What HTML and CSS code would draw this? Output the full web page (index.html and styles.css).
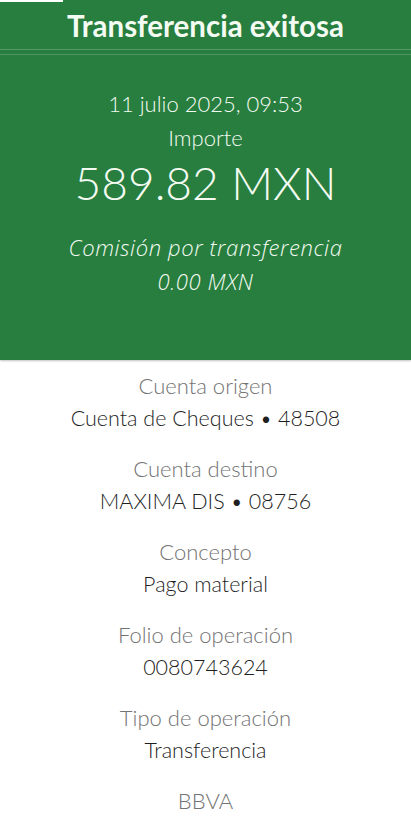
FILE: index.html
```html
<!DOCTYPE html>
<html>
  <head>
    <meta charset="utf-8">
    <meta name="viewport" content="width=device-width, initial-scale=1.0">
    <title>Transferencia exitosa</title>
    <link rel="stylesheet" href="styles.css">
  </head>
  <body>
    <div class="top">
      <div class="progress"><span></span></div>
      <h1 class="title">Transferencia exitosa</h1>
      <div class="rule"></div>

      <div class="summary">
        <p class="line">11 julio 2025, 09:53</p>
        <p class="line">Importe</p>
        <p class="amount">589.82 MXN</p>
        <p class="line fee">Comisión por transferencia</p>
        <p class="line fee">0.00 MXN</p>
      </div>
    </div>

    <div class="details">
      <div class="item">
        <p class="label">Cuenta origen</p>
        <p class="value">Cuenta de Cheques • 48508</p>
      </div>
      <div class="item">
        <p class="label">Cuenta destino</p>
        <p class="value">MAXIMA DIS • 08756</p>
      </div>
      <div class="item">
        <p class="label">Concepto</p>
        <p class="value">Pago material</p>
      </div>
      <div class="item">
        <p class="label">Folio de operación</p>
        <p class="value">0080743624</p>
      </div>
      <div class="item">
        <p class="label">Tipo de operación</p>
        <p class="value">Transferencia</p>
      </div>
      <div class="item">
        <p class="label">BBVA</p>
      </div>
    </div>
  </body>
</html>
```

FILE: styles.css
```css
body {
  margin: 0;
  padding: 0;
  font-family: Lato, "Open Sans", sans-serif;
  background-color: #fff;
  height: 828px;
  overflow: hidden;
  display: flex;
  flex-direction: column;
}

p {
  margin: 0;
  text-align: center;
}

/* cabecera verde */
.top {
  background-color: #277e3f;
  color: #f4fbf2;
  padding-bottom: 62px;
  box-shadow: 0 1px 2px rgba(0, 0, 0, 0.25);
}

.progress {
  height: 2px;
}

.progress span {
  display: block;
  width: 63px;
  height: 2px;
  background-color: #fff;
}

.title {
  margin: 0;
  text-align: center;
  font-size: 29.5px;
  font-weight: bold;
  line-height: 46px;
  height: 46px;
  padding-top: 1px;
}

.rule {
  height: 4px;
  border-top: 1px solid rgba(255, 255, 255, 0.22);
  border-bottom: 1px solid rgba(255, 255, 255, 0.18);
}

.summary {
  padding-top: 32px;
}

.line {
  font-size: 22px;
  line-height: 34px;
  font-weight: 300;
}

.amount {
  font-size: 46px;
  font-weight: 300;
  line-height: 56px;
  margin-bottom: 19px;
}

.fee {
  font-family: "Open Sans", Lato, sans-serif;
  font-size: 22px;
  font-style: italic;
  letter-spacing: 0.6px;
}

/* detalle */
.details {
  flex: 1;
  padding-top: 9px;
  border-bottom: 2px solid #ececec;
}

.item {
  margin-bottom: 17px;
}

.label,
.value {
  font-size: 21.5px;
  line-height: 33px;
  font-weight: 300;
}

.label {
  font-size: 22px;
  color: #737373;
}

.value {
  color: #1f1f1f;
}
```
